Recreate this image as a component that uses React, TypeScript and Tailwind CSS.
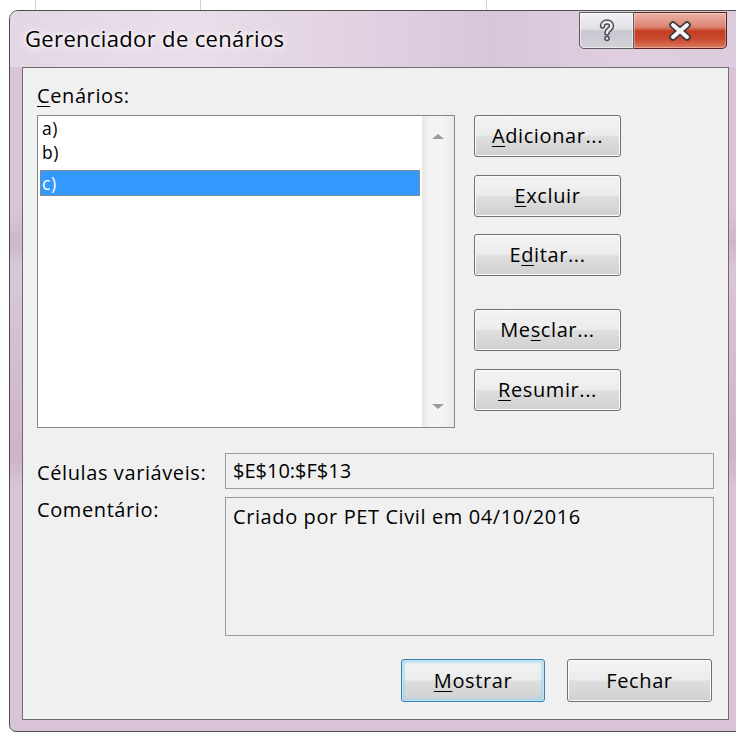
import type { ReactNode } from 'react';

const btnBase =
  'flex items-center justify-center rounded-[3px] border text-[20px] tracking-[0.6px] leading-none text-black bg-[linear-gradient(to_bottom,#f3f3f3_0%,#ececec_48%,#dedede_52%,#d0d0d0_100%)]';

function Key({ children }: { children: ReactNode }) {
  return <span className="underline decoration-1 underline-offset-[3px]">{children}</span>;
}

function SideButton({ children, className }: { children: ReactNode; className?: string }) {
  return (
    <button
      className={`${btnBase} w-[147px] h-[42px] border-[#707070] shadow-[inset_0_0_0_1px_#fbfbfb] ${className ?? ''}`}
    >
      {children}
    </button>
  );
}

function CloseGlyph() {
  return (
    <svg width="26" height="20" viewBox="0 0 26 20">
      <path d="M6 4 L20 16 M20 4 L6 16" stroke="#3d3d3d" strokeWidth="7.5" strokeLinecap="round" fill="none" />
      <path d="M6 4 L20 16 M20 4 L6 16" stroke="#f7f7f7" strokeWidth="4" strokeLinecap="round" fill="none" />
    </svg>
  );
}

function HelpGlyph() {
  return (
    <svg width="18" height="24" viewBox="0 0 18 24">
      <path d="M4.5 7 C4.5 1.8, 13.5 1.8, 13.5 7 C13.5 10.5, 9 10.5, 9 14" stroke="#4a4a52" strokeWidth="5.5" strokeLinecap="round" fill="none" />
      <circle cx="9" cy="19.5" r="2.8" fill="#4a4a52" />
      <path d="M4.5 7 C4.5 1.8, 13.5 1.8, 13.5 7 C13.5 10.5, 9 10.5, 9 14" stroke="#eeeef2" strokeWidth="2.5" strokeLinecap="round" fill="none" />
      <circle cx="9" cy="19.5" r="1.3" fill="#eeeef2" />
    </svg>
  );
}

export default function App() {
  return (
    <div className="relative w-[736px] h-[733px] overflow-hidden bg-white pl-[9px] pt-[10px] font-['Open_Sans',sans-serif]">
      {/* spreadsheet grid lines peeking out behind the dialog */}
      <div className="absolute left-[35px] top-0 h-[12px] w-px bg-[#d0d0d0]" />
      <div className="absolute left-[200px] top-0 h-[12px] w-px bg-[#d0d0d0]" />
      <div className="absolute left-[486px] top-0 h-[12px] w-px bg-[#d0d0d0]" />

      <div className="relative flex flex-col w-[740px] h-[722px] rounded-t-[9px] rounded-b-[7px] border border-[#4e4e4e] bg-[linear-gradient(to_bottom,#d8c3d9_0%,#d8c3d9_28%,#cdb7ce_32%,#dac6db_36%,#d5bfd6_45%,#cbb4cc_62%,#d8c3d9_66%,#d8c3d9_100%)]">
        {/* title bar */}
        <div className="flex h-[56px] justify-between rounded-t-[8px] bg-[linear-gradient(90deg,#e4d7e5_0%,#e9dee9_25%,#e2d3e3_45%,#d9c5da_65%,#dfcfe0_85%,#dccadd_100%)]">
          <div className="pl-[15px] pt-[13px] text-[22px] tracking-[0.35px] leading-[28px] text-black [text-shadow:0_0_10px_#fff,0_0_4px_#fff]">
            Gerenciador de cenários
          </div>
          <div className="flex mr-[21px] mt-[1px] h-[37px]">
            <div className="flex w-[55px] items-center justify-center rounded-bl-[5px] border border-[#5d5d66] bg-[linear-gradient(to_bottom,#f1f0f4_0%,#e2e1e6_45%,#c8c7cf_52%,#d4d3da_100%)] shadow-[inset_0_0_0_1px_#ffffff88]">
              <HelpGlyph />
            </div>
            <div className="flex w-[93px] items-center justify-center rounded-br-[5px] border border-l-0 border-[#5b2217] bg-[linear-gradient(to_bottom,#eab2a6_0%,#dc8470_40%,#c43d22_52%,#c94a30_75%,#dc7a62_100%)] shadow-[inset_0_0_0_1px_#ffffff55]">
              <CloseGlyph />
            </div>
          </div>
        </div>

        {/* client area */}
        <div className="ml-[12px] w-[707px] h-[653px] border border-[#6c6c6c] bg-[#f0f0f0] pl-[14px] pr-[14px] pt-[16px] text-[20px] tracking-[0.6px] text-black">
          <div className="flex">
            <div className="flex flex-col">
              <div className="h-[31px] leading-[24px]">
                <Key>C</Key>enários:
              </div>
              <div className="flex w-[418px] h-[313px] border border-[#828790] bg-white">
                <div className="flex-1 pl-[2px] pr-[2px] text-[17.5px] leading-[24px]">
                  <div className="h-[24px] pl-[2px]">a)</div>
                  <div className="h-[24px] pl-[2px]">b)</div>
                  <div className="mt-[6px] h-[26px] pl-[1px] bg-[#3399ff] text-white border border-dotted border-[#c9813a] leading-[24px]">
                    c)
                  </div>
                </div>
                <div className="flex w-[32px] flex-col items-center justify-between py-[18px] bg-[linear-gradient(90deg,#e6e6e6_0%,#f2f2f2_20%,#f4f4f4_60%,#eaeaea_100%)]">
                  <div className="w-0 h-0 border-l-[6px] border-r-[6px] border-b-[5px] border-l-transparent border-r-transparent border-b-[#9c9c9c]" />
                  <div className="w-0 h-0 border-l-[6px] border-r-[6px] border-t-[5px] border-l-transparent border-r-transparent border-t-[#9c9c9c]" />
                </div>
              </div>
            </div>

            <div className="ml-[19px] flex flex-col pt-[31px]">
              <SideButton>
                <span>
                  <Key>A</Key>dicionar...
                </span>
              </SideButton>
              <SideButton className="mt-[18px]">
                <span>
                  <Key>E</Key>xcluir
                </span>
              </SideButton>
              <SideButton className="mt-[17px]">
                <span>
                  E<Key>d</Key>itar...
                </span>
              </SideButton>
              <SideButton className="mt-[33px]">
                <span>
                  Me<Key>s</Key>clar...
                </span>
              </SideButton>
              <SideButton className="mt-[18px]">
                <span>
                  <Key>R</Key>esumir...
                </span>
              </SideButton>
            </div>
          </div>

          <div className="mt-[25px] flex items-center">
            <div className="w-[188px] pt-[3px] leading-[24px]">Células variáveis:</div>
            <div className="flex w-[489px] h-[36px] items-center border border-[#9b9b9b] pl-[7px] leading-[24px] tracking-[0px]">
              $E$10:$F$13
            </div>
          </div>

          <div className="mt-[8px] flex items-start">
            <div className="w-[188px] pt-[1px] leading-[24px]">Comentário:</div>
            <div className="w-[489px] h-[139px] border border-[#9b9b9b] pl-[7px] pt-[7px] leading-[24px]">
              Criado por PET Civil em 04/10/2016
            </div>
          </div>

          <div className="mt-[23px] flex justify-end gap-[22px] pr-[2px]">
            <button
              className={`${btnBase} w-[144px] h-[43px] border-[#3c7fb1] shadow-[inset_0_0_0_1px_#bfe6f9,inset_0_0_3px_2px_#9ad6f3]`}
            >
              <span>
                <Key>M</Key>ostrar
              </span>
            </button>
            <button className={`${btnBase} w-[145px] h-[43px] border-[#707070] shadow-[inset_0_0_0_1px_#fbfbfb]`}>
              Fechar
            </button>
          </div>
        </div>
      </div>
    </div>
  );
}
